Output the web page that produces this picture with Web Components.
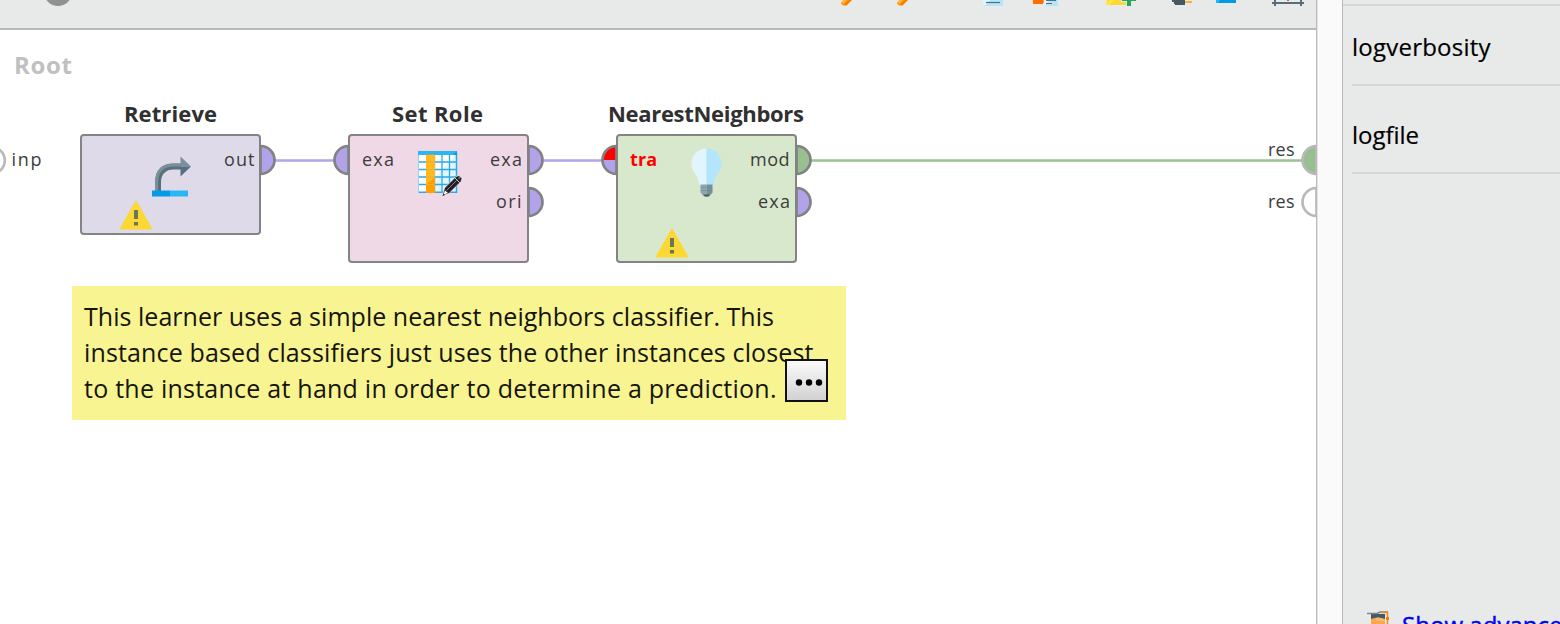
<!DOCTYPE html>
<html lang="en"><head><meta charset="utf-8"><title>Process</title>
<style>html,body{margin:0;height:100%;overflow:hidden;background:#fafafa;font-family:"Open Sans","Noto Sans",sans-serif}</style></head>
<body>
<process-app></process-app>
<script>
const make = (name, html, init) => {
  const t = document.createElement('template');
  t.innerHTML = html;
  customElements.define(name, class extends HTMLElement {
    connectedCallback() {
      if (this.shadowRoot) return;
      this.attachShadow({mode: 'open'}).append(t.content.cloneNode(true));
      if (init) init(this, this.shadowRoot);
    }
  });
};

// A line of text whose tracking is adjusted to span a given width.
make('fit-text', `<style>:host{display:block;white-space:pre;line-height:1}span{display:inline-block}</style><span></span>`, (el, root) => {
  const s = root.querySelector('span');
  s.textContent = el.getAttribute('text');
  const n = s.textContent.length - 1;
  const d = +el.getAttribute('w') - s.getBoundingClientRect().width;
  s.style.letterSpacing = (d / n) + 'px';
  s.style.marginRight = (-d / n) + 'px';
});

make('tool-bar', `<style>:host{display:block;height:28px;border-bottom:2px solid #b9b9b9;background:#e8eae9;overflow:hidden}svg{display:block}</style>
<svg width="1316" height="28">
<circle cx="58" cy="-8" r="14" fill="#919191"/>
<g id="pen"><path d="M841 2.500l6-6h7l-8 9h-3l-2-2z" fill="#ff9800"/><path d="M841 2.500l6-6 2 1-6 6.500z" fill="#ffb74d"/><path d="M844 5l7-7 2 1-6.500 6.500z" fill="#f57c00"/></g>
<use href="#pen" x="56"/>
<path d="M983-1h20v7h-20z" fill="#b3e5fc"/><path d="M983-1h9l-8 7h-1z" fill="#e1f5fe"/><path d="M986 2.500h14" stroke="#546e7a" stroke-width="1.200"/>
<path d="M1033-2h11v6h-11z" fill="#ff6f00"/><path d="M1045-2h13v8h-15z" fill="#b3e5fc"/><path d="M1044-1h6l-5 7h-2z" fill="#e1f5fe"/><path d="M1046 .5h10M1046 3.500h6" stroke="#546e7a" stroke-width="1.200"/>
<path d="M1108-4h16l3 9h-21v-1z" fill="#fdd835"/><path d="M1106 5v-2l7-5h4l-8 7z" fill="#ffeb3b"/><path d="M1121-3h17v5h-5v5h-7v-5h-5z" fill="#e8eae9"/><path d="M1122-3h14v4h-5v5h-4v-5h-5z" fill="#26a65b"/>
<path d="M1172-2h13v7h-10v-1h-1v-2h-2z" fill="#455a64"/><path d="M1185 1h7v2h-7z" fill="#ffb02e"/>
<path d="M1216-3h20v6h-20z" fill="#039be5"/><path d="M1216-3h6l-4 6h-2z" fill="#29b6f6"/>
<path d="M1275-2v8M1301-2v8M1272 3h32" stroke="#546e7a" stroke-width="2"/><path d="M1287-2h2v3h-2z" fill="#f4511e"/>
</svg>`);

// Half-round connector on an operator edge.
make('port-dot', `<style>:host{position:absolute;display:block;width:17px;height:32px}svg{display:block;overflow:visible}</style><svg width="17" height="32"></svg>`, (el, root) => {
  const c = el.getAttribute('fill'), st = el.getAttribute('stroke') || '#828282', left = el.hasAttribute('left');
  const p = left ? 'M15.500 2A14 14 0 0 0 15.500 30Z' : 'M1.500 2A14 14 0 0 1 1.500 30Z';
  const err = el.hasAttribute('error') ? '<path d="M15.500 16V2A14 14 0 0 0 1.500 16Z" fill="#f00"/>' : '';
  root.querySelector('svg').innerHTML = `<path d="${p}" fill="${c}"/>${err}<path d="${p}" fill="none" stroke="${st}" stroke-width="2.700"/>`;
});

make('warning-mark', `<style>:host{position:absolute;display:block}svg{display:block}</style>
<svg width="32" height="30" viewBox="0 0 32 30"><path d="M16 0L32 28v1.500H0V28z" fill="#fdd835"/><path d="M14 10h4v9h-4zM14 22h4v3.500h-4z" fill="#6a765a"/></svg>`);

make('icon-retrieve', `<style>:host{position:absolute;display:block}svg{display:block}</style>
<svg width="40" height="41" viewBox="0 0 40 41"><path d="M6 35V27Q6 10.500 22 10.500H29" fill="none" stroke="#56707c" stroke-width="6"/><path d="M4.500 35V27Q4.500 9 22 9H29" fill="none" stroke="#78909c" stroke-width="3"/><path d="M28.500.5L39 10.500H28.500z" fill="#78909c"/><path d="M28.500 10.500H39L28.500 20.500z" fill="#56707c"/><path d="M0 34.500h18v6H0z" fill="#039be5"/><path d="M18 34.500h18v6H18z" fill="#29b6f6"/></svg>`);

make('icon-role', `<style>:host{position:absolute;display:block}svg{display:block}</style>
<svg width="45" height="46" viewBox="0 0 45 46"><path d="M0 0h39v42H0z" fill="#fff"/><path d="M39 2v39H5z" fill="#e1f5fe"/><path d="M0 11h39M0 18.500h39M0 26h39M0 33.500h39M0 41.300h39" stroke="#29a9e8" stroke-width="1.400"/><path d="M16.500 3v39M24 3v39M31.500 3v39" stroke="#29a9e8" stroke-width="1.300"/><path d="M.5 2v40" stroke="#90d3f7"/><path d="M38.500 2v40" stroke="#29a9e8" stroke-width="1.500"/><path d="M0 0h39v4H0z" fill="#29b6f6"/><path d="M35 4l4-4v4z" fill="#039be5"/><path d="M8 3.500h9V42H8z" fill="#ffa000"/><path d="M8 4h9v22l-9 8z" fill="#ffb921"/><path d="M8 11h9M8 18.500h9M8 26h9M8 33.500h9" stroke="#ffa726"/><path d="M24.500 44.500l2-7.500L38 25.500l3-1 3 3-1 3L31 42.500z" fill="#252126" stroke="#fff" stroke-opacity=".8" stroke-width=".8"/><path d="M28.500 39.500l10-10" stroke="#8f8a8e" stroke-width=".9"/><path d="M25.500 43.500l1.500-4 3 2.500z" fill="#fff"/><path d="M24.500 45l1-2.500 1.500 1.500z" fill="#252126"/><path d="M37 27l4.500 4.500" stroke="#fff" stroke-width=".8"/><path d="M40.500 27h1.500" stroke="#bbb"/></svg>`);

make('icon-bulb', `<style>:host{position:absolute;display:block}svg{display:block}</style>
<svg width="31" height="49" viewBox="0 0 31 49"><path d="M15.500.5C7 .5.500 7 .5 15.500C.5 24 7 26 8.300 37H15.500z" fill="#e1f5fe"/><path d="M15.500.5C24 .5 30.500 7 30.500 15.500C30.500 24 24 26 22.700 37H15.500z" fill="#b3e5fc"/><path d="M9.500 36.500h6V48.500H13l-3.500-4z" fill="#90a4ae"/><path d="M15.500 36.500h6v8L18 48.500h-2.500z" fill="#78909c"/><path d="M9.500 39.500h12M9.500 42.500h12" stroke="#718894" stroke-width=".5"/><path d="M12 46.500h7l-2 2h-3z" fill="#455a64"/></svg>`);

// Operator box; icons, port labels and connectors are slotted.
make('operator-node', `<style>:host{position:absolute;display:block;box-sizing:border-box;border:2px solid #848484;border-radius:4px}
::slotted(*){position:absolute}</style><slot></slot>`);

make('note-card', `<style>:host{position:absolute;display:flex;flex-direction:column;box-sizing:border-box;width:774px;height:134px;padding:12px 12px;background:#f8f491;color:#15150c;font-size:25px}
fit-text{line-height:36px}
.more{position:absolute;left:713px;top:73px;width:43px;height:43px;box-sizing:border-box;border:2px solid #111;background:linear-gradient(#fafafa,#d2d2d2)}svg{display:block}</style>
<fit-text text="This learner uses a simple nearest neighbors classifier. This" w="690"></fit-text>
<fit-text text="instance based classifiers just uses the other instances closest" w="729.500"></fit-text>
<fit-text text="to the instance at hand in order to determine a prediction." w="692.500"></fit-text>
<div class="more"><svg width="39" height="39"><g fill="#000"><circle cx="12" cy="21.500" r="3.200"/><circle cx="22" cy="21.500" r="3.200"/><circle cx="32" cy="21.500" r="3.200"/></g></svg></div>`);

make('process-canvas', `<style>:host{display:block;position:relative;flex:1;background:#fff;overflow:hidden;color:#3c3c3c}
.wires{position:absolute;left:0;top:0}
.p{position:absolute;font-size:18px}.t{position:absolute;font-size:22px;font-weight:700;color:#303030}.root{position:absolute;font-size:24px;font-weight:700;color:#c0c0c0}
.tra{color:#f00;font-weight:700}</style>
<svg class="wires" width="1316" height="594"><circle cx="-8.500" cy="130.500" r="13.300" fill="#fff" stroke="#b9b9b9" stroke-width="2.700"/><path d="M275 130.500H335M543 130.500H603" stroke="#b3a4ec" stroke-width="2.500"/><path d="M811 130.500H1303" stroke="#9ac292" stroke-width="2.500"/></svg>
<fit-text class="root" style="left:14px;top:23px" text="Root" w="58"></fit-text>
<fit-text class="p" style="left:11.500px;top:120px" text="inp" w="30"></fit-text>
<fit-text class="t" style="left:124px;top:72px" text="Retrieve" w="93"></fit-text>
<operator-node style="left:80px;top:104px;width:181px;height:101px;background:#dedaea">
 <icon-retrieve style="left:70px;top:19.500px"></icon-retrieve><warning-mark style="left:38px;top:64px"></warning-mark>
 <fit-text class="p" style="left:142px;top:14px" text="out" w="30.500"></fit-text>
 <port-dot style="left:177px;top:8.300px" fill="#b1a2e9"></port-dot></operator-node>
<fit-text class="t" style="left:392px;top:72px" text="Set Role" w="91"></fit-text>
<operator-node style="left:348px;top:104px;width:181px;height:129px;background:#f0d9e6">
 <icon-role style="left:68px;top:15px"></icon-role>
 <fit-text class="p" style="left:12px;top:14px" text="exa" w="32"></fit-text><fit-text class="p" style="left:140px;top:14px" text="exa" w="32"></fit-text><fit-text class="p" style="left:146px;top:56px" text="ori" w="25.500"></fit-text>
 <port-dot left style="left:-17px;top:8.300px" fill="#b1a2e9"></port-dot><port-dot style="left:177px;top:8.300px" fill="#b1a2e9"></port-dot><port-dot style="left:177px;top:50.300px" fill="#b1a2e9"></port-dot></operator-node>
<fit-text class="t" style="left:608px;top:72px" text="NearestNeighbors" w="196"></fit-text>
<operator-node style="left:616px;top:104px;width:181px;height:129px;background:#d8e8cd">
 <icon-bulb style="left:72.500px;top:11.500px"></icon-bulb><warning-mark style="left:38px;top:92px"></warning-mark>
 <fit-text class="p tra" style="left:12px;top:14px" text="tra" w="27"></fit-text><fit-text class="p" style="left:132px;top:14px" text="mod" w="39.500"></fit-text><fit-text class="p" style="left:140px;top:56px" text="exa" w="32"></fit-text>
 <port-dot left error style="left:-17px;top:8.300px" fill="#b1a2e9"></port-dot><port-dot style="left:177px;top:8.300px" fill="#98bf90"></port-dot><port-dot style="left:177px;top:50.300px" fill="#b1a2e9"></port-dot></operator-node>
<fit-text class="p" style="left:1268px;top:110px" text="res" w="26.500"></fit-text><fit-text class="p" style="left:1268px;top:162px" text="res" w="26.500"></fit-text>
<port-dot left stroke="#b9b9b9" style="left:1301px;top:114.300px" fill="#98bf90"></port-dot><port-dot left stroke="#b9b9b9" style="left:1301px;top:156.300px" fill="#fff"></port-dot>
<note-card style="left:72px;top:256px"></note-card>`);

make('process-panel', `<style>:host{display:flex;flex-direction:column;width:1316px;border-right:1px solid #b9b9b9;box-shadow:1px 0 #e4e4e4;flex:none}</style><tool-bar></tool-bar><process-canvas></process-canvas>`);

make('param-panel', `<style>:host{display:flex;flex-direction:column;flex:1;background:#e8eae9;border-left:1px solid #b9b9b9;margin-left:25px;overflow:hidden;color:#000;font-size:24px}
.top{height:4px;border-bottom:2px solid #d6d6d6;flex:none}
.row{display:flex;align-items:center;height:78px;border-bottom:2px solid #d6d6d6;margin-left:9px;flex:none}.row+.row{height:86px}
fit-text{line-height:34px;-webkit-text-stroke:.2px #000}.row fit-text{margin-top:3px}.row+.row fit-text{margin-top:11px}
.foot{margin-top:auto;height:15px;display:flex;align-items:flex-start;gap:11px;padding-left:24px;color:#00e;flex:none}
.foot fit-text{margin-top:-1px;-webkit-text-stroke:.4px #00f}svg{flex:none;margin-top:2px}</style>
<div class="top"></div>
<div class="row"><fit-text text="logverbosity" w="138.500"></fit-text></div>
<div class="row"><fit-text text="logfile" w="67"></fit-text></div>
<div class="foot"><svg width="24" height="14"><path d="M4 7h14v7H4z" fill="#ffa64d"/><path d="M9 7h9v3H9z" fill="#ffb76b"/><path d="M4 3h14v5q-7-3-14 0z" fill="#455a64"/><path d="M0 2.500h10l3-1.500h8" fill="none" stroke="#78858c" stroke-width="1.500"/><path d="M14 1.500h6.500v12" fill="none" stroke="#f58a1f" stroke-width="1.500"/><path d="M19 6h3v3h-3z" fill="#f57c00"/></svg><fit-text text="Show advanced parameters" w="312"></fit-text></div>`);

make('process-app', `<style>:host{display:flex;width:1560px;height:624px;overflow:hidden}</style><process-panel></process-panel><param-panel></param-panel>`);
</script></body></html>
